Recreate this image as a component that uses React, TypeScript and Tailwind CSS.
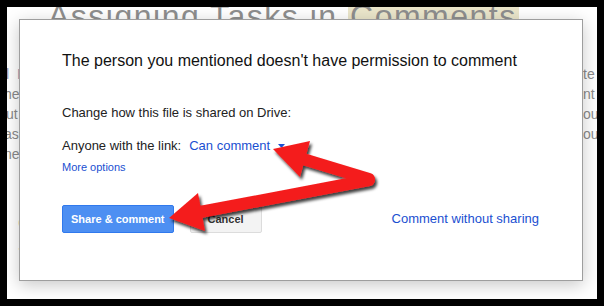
export default function App() {
  return (
    <div className="relative h-[306px] w-[604px] bg-black p-[7px] font-['Liberation_Sans',Arial,sans-serif]">
      <div className="relative h-full overflow-hidden bg-white">
        {/* page behind the dialog */}
        <h1 className="ml-[41px] mt-[-7px] whitespace-nowrap text-[32px] leading-[32px] tracking-[1.5px] text-[#8e8e8e]">
          Assigning Tasks in <span className="bg-[#ebe6cb] pl-[2px] pr-[2px]">Comments</span>
        </h1>
        <div className="mt-[32px] flex justify-between text-[14px] leading-[20px] text-[#8a8a8a]">
          <div className="flex w-[14px] flex-col whitespace-nowrap">
            <span className="ml-[-1px] text-[#8c94b4]">l&nbsp;&nbsp;I</span>
            <span className="ml-[-3px]">her</span>
            <span className="ml-[-1px]">ut</span>
            <span className="ml-[-3px]">ass</span>
            <span className="ml-[-3px]">ne</span>
            <span className="ml-[11px] mt-[48px] text-[20px] leading-[22px] text-[#6b5f4a]">C</span>
            <span className="ml-[11px] text-[20px] leading-[22px] text-[#6b5f4a]">S</span>
          </div>
          <div className="flex w-[14px] flex-col whitespace-nowrap">
            <span>te</span>
            <span>nt</span>
            <span>ou</span>
            <span>ou</span>
          </div>
        </div>

        {/* dialog */}
        <div className="absolute left-[12px] top-[12px] h-[262px] w-[564px] border border-[#9e9e9e] bg-white pl-[42px] pr-[43px] pt-[31px] shadow-[0_4px_16px_rgba(0,0,0,0.22)]">
          <h2 className="text-[16px] leading-[20px] text-[#111]">
            The person you mentioned doesn't have permission to comment
          </h2>
          <p className="mt-[34px] text-[13px] leading-[16px] text-[#222]">
            Change how this file is shared on Drive:
          </p>
          <div className="mt-[17px] flex items-center text-[13px] leading-[16px] text-[#222]">
            <span>Anyone with the link:</span>
            <span className="ml-[8px] text-[#1a4fd1]">Can comment</span>
            <svg className="ml-[8px]" width="7" height="4" viewBox="0 0 7 4">
              <path d="M0 0h7L3.5 4z" fill="#1a4fd1" />
            </svg>
          </div>
          <div className="mt-[6px] text-[11px] leading-[14px] text-[#1a4fd1]">More options</div>
          <div className="mt-[31px] flex items-center">
            <button className="h-[28px] rounded-[2px] border border-[#3079ed] bg-[#4d8ff2] px-[8px] text-[11px] font-bold text-white">
              Share &amp; comment
            </button>
            <button className="ml-[16px] h-[28px] w-[72px] rounded-[2px] border border-[#dcdcdc] bg-[#f3f3f3] text-[11px] font-bold text-[#333]">
              Cancel
            </button>
            <span className="ml-auto text-[13px] leading-[16px] text-[#1a4fd1]">Comment without sharing</span>
          </div>
        </div>
      </div>

      {/* annotation arrows */}
      <svg className="absolute left-0 top-0" width="604" height="306" viewBox="0 0 604 306">
        <defs>
          <filter id="arrowShadow" x="-20%" y="-20%" width="140%" height="140%">
            <feDropShadow dx="2" dy="3" stdDeviation="1.6" floodColor="#000" floodOpacity="0.75" />
          </filter>
        </defs>
        <g filter="url(#arrowShadow)" fill="#f41e1e" stroke="#f41e1e">
          <line x1="369" y1="179" x2="303" y2="159" strokeWidth="12" strokeLinecap="round" />
          <polygon points="273,149 310,141 300,177" stroke="none" />
          <line x1="369" y1="180" x2="200" y2="212" strokeWidth="12" strokeLinecap="round" />
          <polygon points="169,218 198,193 205,231" stroke="none" />
        </g>
      </svg>
    </div>
  )
}
